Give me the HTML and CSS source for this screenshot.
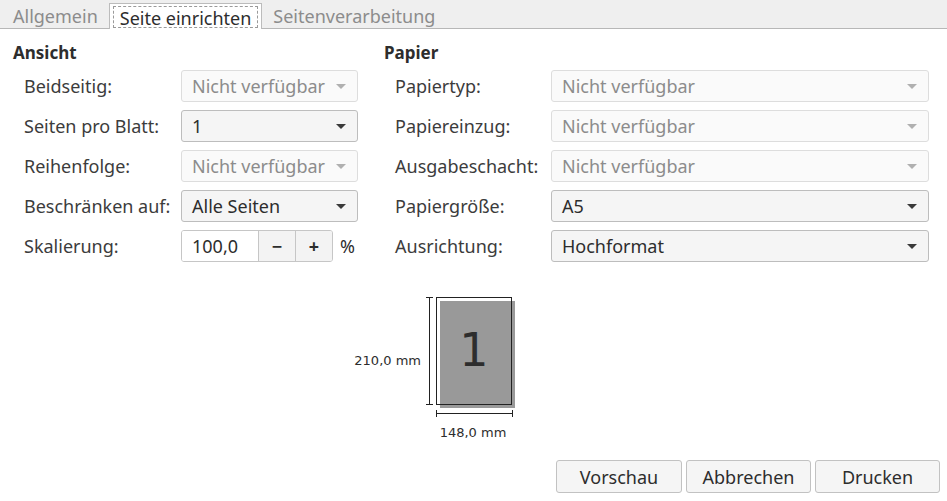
FILE: index.html
```html
<!DOCTYPE html>
<html lang="de">
<head>
<meta charset="utf-8">
<title>Drucken</title>
<link rel="stylesheet" href="styles.css">
</head>
<body>
<div class="tabbar">
  <div class="tab">Allgemein</div>
  <div class="tab active"><span class="focus">Seite einrichten</span></div>
  <div class="tab">Seitenverarbeitung</div>
</div>
<div class="columns">
  <section class="sec sec-left">
    <h2 class="heading">Ansicht</h2>
    <div class="grid grid-left">
      <div class="label">Beidseitig:</div>
      <div class="combo disabled"><span>Nicht verfügbar</span><i class="arrow"></i></div>
      <div class="label">Seiten pro Blatt:</div>
      <div class="combo"><span>1</span><i class="arrow"></i></div>
      <div class="label">Reihenfolge:</div>
      <div class="combo disabled"><span>Nicht verfügbar</span><i class="arrow"></i></div>
      <div class="label">Beschränken auf:</div>
      <div class="combo"><span>Alle Seiten</span><i class="arrow"></i></div>
      <div class="label">Skalierung:</div>
      <div class="spinrow">
        <div class="spin">
          <div class="entry">100,0</div>
          <div class="sbtn">−</div>
          <div class="sbtn">+</div>
        </div>
        <span class="pct">%</span>
      </div>
    </div>
  </section>
  <section class="sec sec-right">
    <h2 class="heading">Papier</h2>
    <div class="grid grid-right">
      <div class="label">Papiertyp:</div>
      <div class="combo disabled"><span>Nicht verfügbar</span><i class="arrow"></i></div>
      <div class="label">Papiereinzug:</div>
      <div class="combo disabled"><span>Nicht verfügbar</span><i class="arrow"></i></div>
      <div class="label">Ausgabeschacht:</div>
      <div class="combo disabled"><span>Nicht verfügbar</span><i class="arrow"></i></div>
      <div class="label">Papiergröße:</div>
      <div class="combo"><span>A5</span><i class="arrow"></i></div>
      <div class="label">Ausrichtung:</div>
      <div class="combo"><span>Hochformat</span><i class="arrow"></i></div>
    </div>
  </section>
</div>
<div class="preview">
  <svg class="preview-svg" width="947" height="180" viewBox="0 270 947 180">
    <rect x="440" y="301" width="75" height="107" fill="#999999"/>
    <rect x="436.5" y="297.5" width="75" height="107" fill="none" stroke="#222" stroke-width="1"/>
    <line x1="429.5" y1="297" x2="429.5" y2="405" stroke="#222"/>
    <line x1="426" y1="297.5" x2="433" y2="297.5" stroke="#222"/>
    <line x1="426" y1="404.5" x2="433" y2="404.5" stroke="#222"/>
    <line x1="436" y1="413.5" x2="513" y2="413.5" stroke="#222"/>
    <line x1="436.5" y1="410" x2="436.5" y2="417" stroke="#222"/>
    <line x1="512.5" y1="410" x2="512.5" y2="417" stroke="#222"/>
    <text x="474" y="366" class="pgnum" text-anchor="middle">1</text>
    <text x="421" y="365" class="dim" text-anchor="end">210,0 mm</text>
    <text x="473" y="437" class="dim" text-anchor="middle">148,0 mm</text>
  </svg>
</div>
<div class="buttons">
  <button class="btn btn-vorschau">Vorschau</button>
  <button class="btn">Abbrechen</button>
  <button class="btn">Drucken</button>
</div>
</body>
</html>
```
FILE: styles.css
```css
html, body {
  margin: 0;
  padding: 0;
  background: #ffffff;
}
body {
  width: 947px;
  height: 501px;
  overflow: hidden;
  font-family: "Noto Sans", "DejaVu Sans", sans-serif;
  font-size: 18px;
  color: #3c3c3c;
}
.tabbar {
  height: 28px;
  background: #efefef;
  border-bottom: 1px solid #b7b7b7;
  display: flex;
  align-items: flex-end;
  padding-left: 2px;
  box-sizing: content-box;
}
.tab {
  height: 25px;
  line-height: 27px;
  padding: 0 11px;
  color: #8c8c8c;
  font-size: 18px;
  box-sizing: border-box;
}
.tab.active {
  background: #ffffff;
  color: #2d2d2d;
  border: 1px solid #bcbcbc;
  border-bottom: none;
  height: 26px;
  margin-bottom: -1px;
  padding: 2px 3px 0 3px;
  line-height: 20px;
}
.tab.active .focus {
  display: block;
  border: 1px dashed #9a9a9a;
  padding: 0 6px;
  height: 22px;
  line-height: 22px;
  box-sizing: border-box;
}
.columns {
  display: flex;
  padding-left: 13px;
  gap: 26px;
}
.sec-left { width: 345px; }
.sec-right { width: 545px; }
.heading {
  margin: 0;
  font-size: 17px;
  font-weight: bold;
  color: #2d2d2d;
  height: 23px;
  line-height: 20px;
  padding-top: 14px;
  box-sizing: content-box;
}
.grid {
  display: grid;
  row-gap: 8px;
  padding-left: 11px;
  margin-top: 4px;
  grid-auto-rows: 32px;
  align-items: center;
}
.grid-left { grid-template-columns: 157px 177px; }
.grid-right { grid-template-columns: 156px 378px; }
.label {
  font-size: 18px;
  color: #3c3c3c;
  white-space: nowrap;
}
.combo {
  height: 32px;
  box-sizing: border-box;
  border: 1px solid #bdbdbd;
  border-radius: 3px;
  background: #f5f5f5;
  display: flex;
  align-items: center;
  justify-content: space-between;
  padding: 0 11px 0 10px;
  font-size: 18px;
  color: #2d2d2d;
  white-space: nowrap;
}
.combo.disabled {
  background: #fafafa;
  border-color: #dddddd;
  color: #8c8c8c;
}
.arrow {
  width: 0;
  height: 0;
  border-left: 5px solid transparent;
  border-right: 5px solid transparent;
  border-top: 5px solid #3a3a3a;
}
.combo.disabled .arrow { border-top-color: #b0b0b0; }
.spinrow {
  display: flex;
  align-items: center;
  gap: 7px;
}
.spin {
  display: flex;
  height: 32px;
  box-sizing: border-box;
  border: 1px solid #c6c6c6;
  border-radius: 3px;
  overflow: hidden;
}
.entry {
  width: 76px;
  background: #ffffff;
  padding-left: 10px;
  box-sizing: border-box;
  line-height: 30px;
  font-size: 18px;
  color: #2d2d2d;
}
.sbtn {
  width: 36px;
  background: #f3f3f3;
  border-left: 1px solid #c6c6c6;
  text-align: center;
  line-height: 30px;
  font-size: 18px;
  font-weight: bold;
  color: #2d2d2d;
}
.pct { font-size: 18px; color: #2d2d2d; }
.preview { height: 180px; margin-top: 8px; }
.preview-svg { display: block; }
.pgnum {
  font-family: "DejaVu Sans", sans-serif;
  font-size: 46px;
  fill: #2d2d2d;
}
.dim {
  font-family: "DejaVu Sans", sans-serif;
  font-size: 13px;
  fill: #2d2d2d;
}
.buttons {
  display: flex;
  justify-content: flex-end;
  gap: 4px;
  padding-right: 7px;
  margin-top: 10px;
}
.btn {
  width: 125px;
  height: 33px;
  border: 1px solid #c2c2c2;
  border-radius: 3px;
  background: #f5f5f5;
  font-family: inherit;
  font-size: 18px;
  color: #2d2d2d;
  padding: 0;
}
.btn-vorschau { width: 126px; }
```
